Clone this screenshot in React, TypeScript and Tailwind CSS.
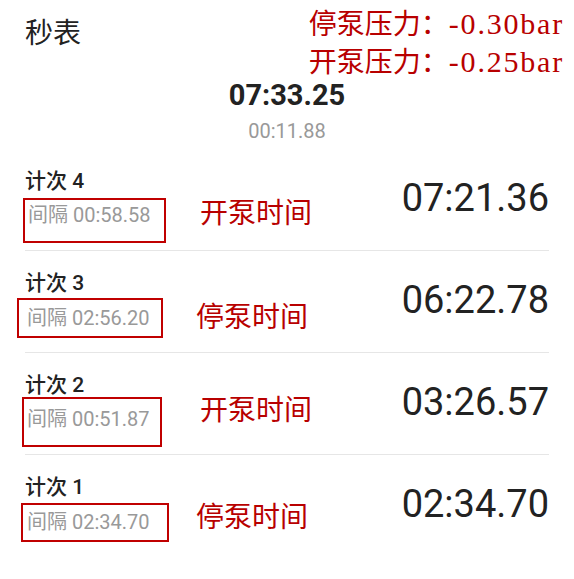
const laps = [
  {
    n: 4,
    gap: "00:58.58",
    total: "07:21.36",
    note: "开泵时间",
    box: "ml-[-2px] mt-[5px] w-[143px] h-[45px] pt-[3px] pl-[3px]",
    noteCls: "ml-[5px] mt-[46px]",
  },
  {
    n: 3,
    gap: "02:56.20",
    total: "06:22.78",
    note: "停泵时间",
    box: "ml-[-8px] mt-[3px] w-[146px] h-[40px] pt-[6px] pl-[8px]",
    noteCls: "ml-[1px] mt-[48px]",
  },
  {
    n: 2,
    gap: "00:51.87",
    total: "03:26.57",
    note: "开泵时间",
    box: "ml-[-3px] mt-[0px] w-[140px] h-[50px] pt-[8px] pl-[3px]",
    noteCls: "ml-[5px] mt-[39px]",
  },
  {
    n: 1,
    gap: "02:34.70",
    total: "02:34.70",
    note: "停泵时间",
    box: "ml-[-4px] mt-[4px] w-[148px] h-[39px] pt-[5px] pl-[4px]",
    noteCls: "ml-[1px] mt-[44px]",
  },
];

export default function App() {
  return (
    <div className="w-[574px] h-[579px] bg-white overflow-hidden text-[#222] font-['Roboto','Noto_Sans_CJK_SC',sans-serif]">
      <div className="flex justify-between">
        <div className="pl-[25px] pt-[16px] text-[28px] leading-[36px]">秒表</div>
        <div className="pr-[10px] pt-[4px] text-[#b80000] text-[28px] leading-[37px] font-['Noto_Sans_CJK_SC',sans-serif]">
          <div>
            停泵压力：
            <span className="font-['Liberation_Serif',serif] text-[30px] tracking-[1.8px]">-0.30bar</span>
          </div>
          <div>
            开泵压力：
            <span className="font-['Liberation_Serif',serif] text-[30px] tracking-[1.8px]">-0.25bar</span>
          </div>
        </div>
      </div>

      <div className="mt-[-2px] text-center text-[29px] leading-[34px] font-bold">07:33.25</div>
      <div className="mt-[7px] text-center text-[20px] leading-[24px] text-[#999]">00:11.88</div>

      <div className="mt-[6px] px-[25px]">
        {laps.map((lap, i) => (
          <div
            key={lap.n}
            className={
              "flex items-start h-[102px] " +
              (i < laps.length - 1 ? "border-b border-[#e6e6e6]" : "")
            }
          >
            <div className="w-[170px] pt-[20px]">
              <div className="text-[21px] leading-[24px] font-medium">计次 {lap.n}</div>
              <div
                className={
                  "box-border border-2 border-[#c00000] text-[20px] leading-[24px] text-[#999] whitespace-nowrap " +
                  lap.box
                }
              >
                间隔 {lap.gap}
              </div>
            </div>
            <div
              className={
                "text-[28px] leading-[32px] text-[#b80000] font-['Noto_Sans_CJK_SC',sans-serif] " +
                lap.noteCls
              }
            >
              {lap.note}
            </div>
            <div className="ml-auto mt-[27px] text-[38px] leading-[44px]">{lap.total}</div>
          </div>
        ))}
      </div>
    </div>
  );
}
